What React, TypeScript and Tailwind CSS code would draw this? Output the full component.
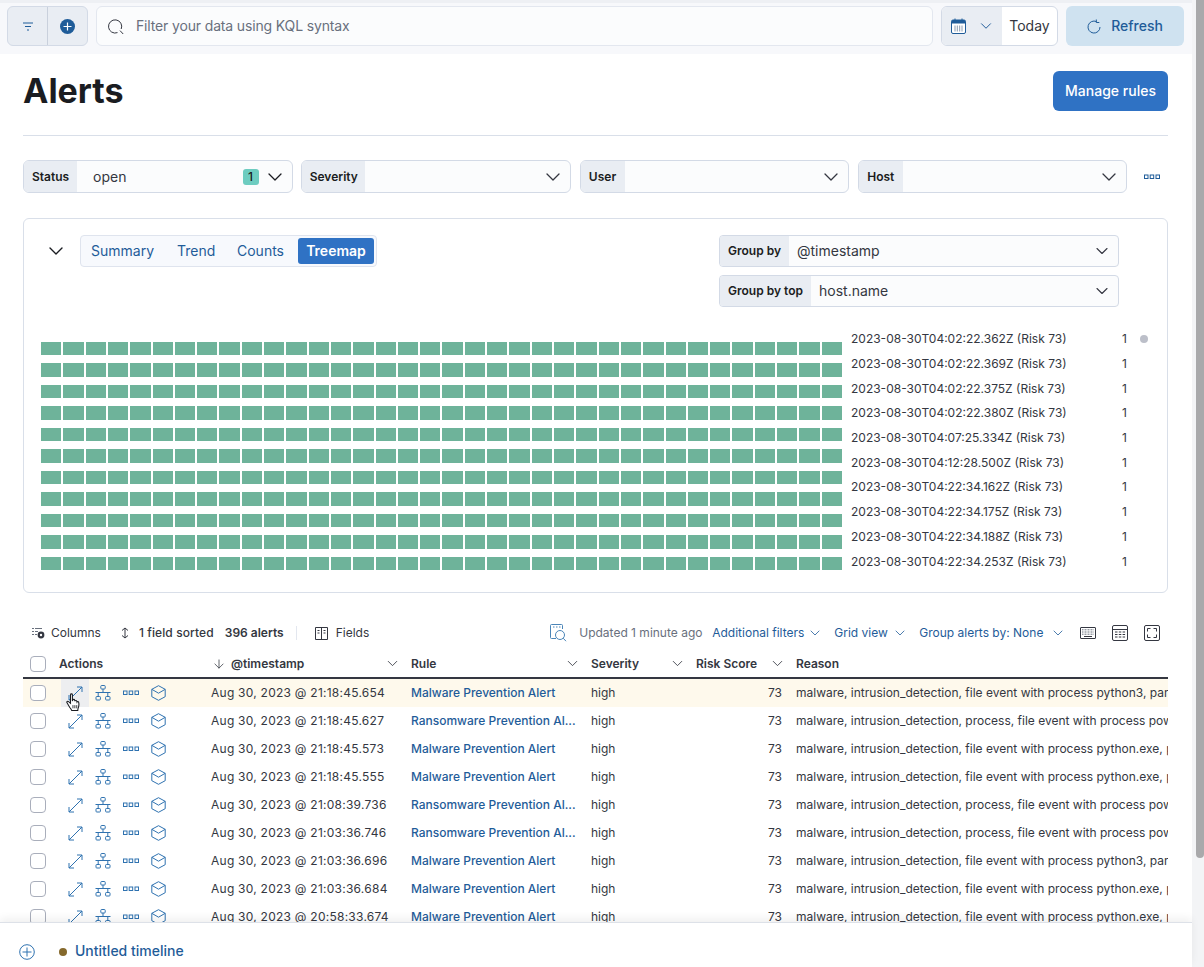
import { ChevronDown, ArrowDown } from 'lucide-react';

const legend = [
  '2023-08-30T04:02:22.362Z (Risk 73)',
  '2023-08-30T04:02:22.369Z (Risk 73)',
  '2023-08-30T04:02:22.375Z (Risk 73)',
  '2023-08-30T04:02:22.380Z (Risk 73)',
  '2023-08-30T04:07:25.334Z (Risk 73)',
  '2023-08-30T04:12:28.500Z (Risk 73)',
  '2023-08-30T04:22:34.162Z (Risk 73)',
  '2023-08-30T04:22:34.175Z (Risk 73)',
  '2023-08-30T04:22:34.188Z (Risk 73)',
  '2023-08-30T04:22:34.253Z (Risk 73)',
];

const rows = [
  ['Aug 30, 2023 @ 21:18:45.654', 'Malware Prevention Alert', 'malware, intrusion_detection, file event with process python3, parent process bash'],
  ['Aug 30, 2023 @ 21:18:45.627', 'Ransomware Prevention Al...', 'malware, intrusion_detection, process, file event with process powershell.exe'],
  ['Aug 30, 2023 @ 21:18:45.573', 'Malware Prevention Alert', 'malware, intrusion_detection, file event with process python.exe, parent process'],
  ['Aug 30, 2023 @ 21:18:45.555', 'Malware Prevention Alert', 'malware, intrusion_detection, file event with process python.exe, parent process'],
  ['Aug 30, 2023 @ 21:08:39.736', 'Ransomware Prevention Al...', 'malware, intrusion_detection, process, file event with process powershell.exe'],
  ['Aug 30, 2023 @ 21:03:36.746', 'Ransomware Prevention Al...', 'malware, intrusion_detection, process, file event with process powershell.exe'],
  ['Aug 30, 2023 @ 21:03:36.696', 'Malware Prevention Alert', 'malware, intrusion_detection, file event with process python3, parent process bash'],
  ['Aug 30, 2023 @ 21:03:36.684', 'Malware Prevention Alert', 'malware, intrusion_detection, file event with process python.exe, parent process'],
  ['Aug 30, 2023 @ 20:58:33.674', 'Malware Prevention Alert', 'malware, intrusion_detection, file event with process python.exe, parent process'],
];

const cells = Array.from({ length: 396 }, (_, i) => i);

function Dots({ className = '' }: { className?: string }) {
  return (
    <svg width="16" height="6" viewBox="0 0 16 6" fill="none" stroke="currentColor" strokeWidth="1" className={className}>
      <rect x="0.5" y="1" width="3.5" height="3.5" />
      <rect x="6.2" y="1" width="3.5" height="3.5" />
      <rect x="12" y="1" width="3.5" height="3.5" />
    </svg>
  );
}

function ExpandIcon() {
  return (
    <svg width="15" height="15" viewBox="0 0 15 15" fill="none" stroke="currentColor" strokeWidth="1">
      <path d="M1 14 14 1M9 1h5v5M1 9v5h5" />
    </svg>
  );
}

function TreeIcon() {
  return (
    <svg width="16" height="16" viewBox="0 0 16 16" fill="none" stroke="currentColor" strokeWidth="1">
      <rect x="5.800" y="0.500" width="4.400" height="3.500" rx="0.800" />
      <rect x="1" y="11.500" width="4.400" height="3.500" rx="0.800" />
      <rect x="10.600" y="11.500" width="4.400" height="3.500" rx="0.800" />
      <path d="M8 4v3.500M3.200 11.500V7.500M12.800 11.500V7.500M0.500 7.500h15" />
    </svg>
  );
}

function CubeIcon() {
  return (
    <svg width="15" height="16" viewBox="0 0 15 16" fill="none" stroke="currentColor" strokeWidth="1">
      <path d="M7.500 0.700 14.200 4.300v7.400L7.500 15.300.8 11.700V4.300zM.8 4.300l6.700 3.900 6.700-3.900" />
    </svg>
  );
}

function SearchIcon() {
  return (
    <svg width="16" height="17" viewBox="0 0 16 17" fill="none" stroke="currentColor" strokeWidth="1" className="text-[#343741]">
      <path d="M9.500 14.600A6.600 6.600 0 1 1 13.200 11M12 12.600 15.200 16" />
    </svg>
  );
}

function CalendarIcon() {
  return (
    <svg width="15" height="16" viewBox="0 0 15 16" fill="none" className="text-[#1f5c99]">
      <rect x="0.500" y="2" width="14" height="13.500" rx="1.500" fill="#ffffff" stroke="currentColor" />
      <path d="M0.500 3.500a1.500 1.500 0 0 1 1.500-1.500h11a1.500 1.500 0 0 1 1.500 1.500V5.500h-14z" fill="currentColor" />
      <path d="M4 0.500v2.500M11 0.500v2.500" stroke="currentColor" />
      <path d="M4 7.500v6M6.300 7.500v6M8.700 7.500v6M11 7.500v6" stroke="#8a9bb0" />
    </svg>
  );
}

function RefreshIcon() {
  return (
    <svg width="14" height="15" viewBox="0 0 14 15" fill="none" stroke="currentColor" strokeWidth="1">
      <path d="M9.500 2.600A6 6 0 1 0 13 8M9.300 0.500v3h3" />
    </svg>
  );
}

function FilterIcon() {
  return (
    <svg width="12" height="9" viewBox="0 0 12 9" fill="none" stroke="currentColor" strokeWidth="1">
      <path d="M1 1h10M3 4.500h6M5 8h2" />
    </svg>
  );
}

function PlusFilled() {
  return (
    <svg width="15" height="15" viewBox="0 0 15 15">
      <circle cx="7.500" cy="7.500" r="7.500" fill="#1f5c99" />
      <path d="M7.500 3.500v8M3.500 7.500h8" stroke="#ffffff" strokeWidth="1.200" />
    </svg>
  );
}

function PlusOutline() {
  return (
    <svg width="16" height="16" viewBox="0 0 16 16" fill="none" stroke="#2f72b0" strokeWidth="1">
      <circle cx="8" cy="8" r="7.300" />
      <path d="M8 3.500v9M3.500 8h9" />
    </svg>
  );
}

function ColumnsIcon() {
  return (
    <svg width="13" height="12" viewBox="0 0 13 12" className="text-[#343741]">
      <path d="M0 1h2v1H0zM0 4h2v1H0zM0 7h2v1H0zM3 1h7v1H3zM3 4h3v1H3zM3 7h2v1H3z" fill="#69707d" />
      <circle cx="9" cy="8" r="3.400" fill="currentColor" />
      <circle cx="9" cy="8" r="1.200" fill="#ffffff" />
    </svg>
  );
}

function SortIcon() {
  return (
    <svg width="10" height="12" viewBox="0 0 10 12" fill="none" stroke="#343741" strokeWidth="1">
      <path d="M5 1v10M2 3.500 5 1l3 2.500M2 8.500 5 11l3-2.500" />
    </svg>
  );
}

function FieldsIcon() {
  return (
    <svg width="13" height="13" viewBox="0 0 13 13" fill="none" stroke="#343741" strokeWidth="1">
      <path d="M.5.500h12v12H.5zM6.500.500v12M8.500 3.500h2M8.500 6h2M2.500 3.500h2M2.500 6h2" />
    </svg>
  );
}

function InspectIcon() {
  return (
    <svg width="17" height="18" viewBox="0 0 17 18" fill="none" stroke="#4a85b8" strokeWidth="1">
      <path d="M6 14.500H1.500a1 1 0 0 1-1-1v-12a1 1 0 0 1 1-1h10a1 1 0 0 1 1 1V5" />
      <path d="M3 3h1.500M6 3h1.500M9 3h1.500" />
      <circle cx="10" cy="11" r="4.500" />
      <path d="M13.200 14.200 16 17.200" />
    </svg>
  );
}

function KeyboardIcon() {
  return (
    <svg width="16" height="12" viewBox="0 0 16 12" fill="none" stroke="#343741" strokeWidth="1">
      <rect x="0.500" y="0.500" width="15" height="11" rx="0.500" fill="#ffffff" />
      <path d="M2 2.800h12M2 5h12M2 7.200h12" stroke="#69707d" strokeDasharray="1 0.500" />
      <path d="M4 9.500h8" />
    </svg>
  );
}

function TableIcon() {
  return (
    <svg width="16" height="16" viewBox="0 0 16 16" fill="none" stroke="#343741" strokeWidth="1">
      <rect x="0.500" y="0.500" width="15" height="15" rx="1.500" />
      <path d="M.5 4.500h15" />
      <path d="M3 7h2.500M6.800 7h2.500M10.600 7h2.500M3 9.500h2.500M6.800 9.500h2.500M10.600 9.500h2.500M3 12h2.500M6.800 12h2.500M10.600 12h2.500" />
    </svg>
  );
}

function FullScreenIcon() {
  return (
    <svg width="16" height="16" viewBox="0 0 16 16" fill="none" stroke="#343741" strokeWidth="1">
      <rect x="0.500" y="0.500" width="15" height="15" rx="1.500" />
      <path d="M6.500 3.500h-3v3M9.500 3.500h3v3M6.500 12.500h-3v-3M9.500 12.500h3v-3" />
    </svg>
  );
}

function PointerIcon() {
  return (
    <svg width="16" height="19" viewBox="0 0 15 18" className="absolute left-[43px] top-[14px]">
      <path
        d="M4.200 1.600c0-1 1.800-1 1.800 0v6l.3-1c.4-.8 1.700-.7 1.800.2l.2.900c.2-.8 1.600-.8 1.800.1l.2.800c.3-.7 1.600-.6 1.700.3.300 2 .2 3.700-.4 5-.4 1-.5 1.600-.5 2.600H5.300c-.3-1-1-1.800-1.800-2.800L.9 9.300c-.6-1 .6-2 1.500-1.200l1.800 1.700z"
        fill="#ffffff"
        stroke="#1a1c21"
        strokeWidth="1"
      />
      <path d="M6.500 11.500v3M8.300 11.500v3M10.100 11.500v3" stroke="#1a1c21" strokeWidth="0.800" />
    </svg>
  );
}

function FilterControl({ label, value, badge, labelWidth }: { label: string; value?: string; badge?: boolean; labelWidth: string }) {
  return (
    <div className="flex h-[33px] w-[269.5px] items-stretch overflow-hidden rounded-md border border-[#d3dae6] bg-[#fbfcfd]">
      <div className={`flex items-center justify-center bg-[#e9edf3] text-[12px] font-semibold text-[#1a1c21] ${labelWidth}`}>{label}</div>
      <div className="flex flex-1 items-center pl-[16px] pr-[5px] text-[14px] text-[#343741]">
        <span className="flex-1">{value}</span>
        {badge && (
          <span className="mr-[4px] flex h-[16px] w-[16px] items-center justify-center rounded-[3px] bg-[#6dccc0] text-[12px] font-medium text-[#1a1c21]">1</span>
        )}
        <ChevronDown size={24} strokeWidth={1.3} className={badge ? 'text-[#1a1c21]' : 'text-[#343741]'} />
      </div>
    </div>
  );
}

function SelectRow({ label, value, labelWidth }: { label: string; value: string; labelWidth: string }) {
  return (
    <div className="flex h-[32px] w-[400px] items-stretch overflow-hidden rounded-[4px] border border-[#d3dae6] bg-[#fbfcfd]">
      <div className={`flex items-center justify-center bg-[#e9edf3] text-[12px] font-semibold text-[#1a1c21] ${labelWidth}`}>{label}</div>
      <div className="flex flex-1 items-center pl-[8px] pr-[6px] text-[14px] text-[#343741]">
        <span className="mb-[2px] flex-1">{value}</span>
        <ChevronDown size={20} strokeWidth={1.3} />
      </div>
    </div>
  );
}

function HeaderCell({ label, className }: { label: string; className: string }) {
  return (
    <div className={`flex shrink-0 items-center justify-between pr-[10px] ${className}`}>
      <span className="text-[12px] font-semibold text-[#343741]">{label}</span>
      <ChevronDown size={17} strokeWidth={1.2} className="text-[#343741]" />
    </div>
  );
}

export default function App() {
  return (
    <div className="relative flex h-[967px] w-[1204px] overflow-hidden bg-white font-['Inter',sans-serif] text-[#343741]">
      <div className="flex w-[1192px] shrink-0 flex-col">
        {/* search bar */}
        <div className="flex h-[54px] items-center gap-[8px] border-t-[3px] border-[#eef0f4] bg-[#f7f8fb] pb-[5px] pl-[7px] pr-[8px]">
          <div className="flex h-[40px] w-[81px] overflow-hidden rounded-md border border-[#d3dae6] bg-[#e9edf3]">
            <div className="flex w-[40px] items-center justify-center border-r border-[#c9d0dc] text-[#1f5c99]">
              <FilterIcon />
            </div>
            <div className="flex flex-1 items-center justify-center">
              <PlusFilled />
            </div>
          </div>
          <div className="flex h-[40px] w-[837px] items-center rounded-md border border-[#e3e7ef] bg-[#fbfcfd] pl-[11px]">
            <SearchIcon />
            <span className="mb-[2px] ml-[12px] text-[14px] tracking-[-0.15px] text-[#69707d]">Filter your data using KQL syntax</span>
          </div>
          <div className="flex h-[40px] w-[117px] overflow-hidden rounded-md border border-[#d3dae6] bg-white">
            <div className="flex w-[60px] items-center bg-[#e9edf3] pl-[9px]">
              <CalendarIcon />
              <ChevronDown size={18} strokeWidth={1.3} className="ml-[11px] text-[#1f5c99]" />
            </div>
            <div className="flex flex-1 items-center justify-center pb-[2px] text-[14px] text-[#343741]">Today</div>
          </div>
          <div className="flex h-[40px] w-[118px] items-center justify-center gap-[10px] rounded-md bg-[#cfe2f0] text-[14px] font-medium text-[#1f5c99]">
            <RefreshIcon />
            <span className="mb-[2px]">Refresh</span>
          </div>
        </div>

        {/* page title */}
        <div className="ml-[23px] mr-[24px] flex h-[82px] items-center justify-between border-b border-[#d9dfe9] pb-[9px] pt-[2px]">
          <h1 className="text-[34px] font-bold leading-none text-[#1a1c21]">Alerts</h1>
          <div className="flex h-[40px] w-[115px] items-center justify-center rounded-md bg-[#2f72c4] pb-[2px] text-[14px] font-medium text-white">Manage rules</div>
        </div>

        {/* filters */}
        <div className="mt-[24px] flex items-center gap-x-[8.75px] px-[23px]">
          <FilterControl label="Status" value="open" badge labelWidth="w-[53px]" />
          <FilterControl label="Severity" labelWidth="w-[63px]" />
          <FilterControl label="User" labelWidth="w-[44px]" />
          <FilterControl label="Host" labelWidth="w-[44px]" />
          <Dots className="ml-[8px] text-[#1f5c99]" />
        </div>

        {/* histogram panel */}
        <div className="ml-[23px] mr-[24px] mt-[25px] h-[375px] rounded-md border border-[#d9dfe9] pl-[17px]">
          <div className="flex h-[108px] pt-[16px]">
            <div className="flex w-[39px] items-start pl-[3px] pt-[4px]">
              <ChevronDown size={24} strokeWidth={1.4} className="text-[#1a1c21]" />
            </div>
            <div className="flex h-[32px] w-[297px] items-center rounded-[4px] border border-[#dfe4ee] bg-[#f7f9fd] pl-[10px] pr-[2px] text-[14px] text-[#1f5c99]">
              <span className="mb-[2px] w-[86px]">Summary</span>
              <span className="mb-[2px] w-[60px]">Trend</span>
              <span className="mb-[2px] w-[61px]">Counts</span>
              <span className="flex h-[26px] flex-1 items-center justify-center rounded-[3px] bg-[#2f72c4] pb-[2px] font-semibold text-white">Treemap</span>
            </div>
            <div className="ml-[342px] flex flex-col gap-[8px]">
              <SelectRow label="Group by" value="@timestamp" labelWidth="w-[69px]" />
              <SelectRow label="Group by top" value="host.name" labelWidth="w-[91px]" />
            </div>
          </div>
          <div className="flex">
            <div className="mt-[15px] grid h-[228px] w-[801px] grid-cols-[repeat(36,minmax(0,1fr))] grid-rows-[repeat(11,minmax(0,1fr))] gap-x-[2px] gap-y-[8px]">
              {cells.map((c) => (
                <div key={c} className="bg-[#6eb39a]" />
              ))}
            </div>
            <div className="ml-[9px] flex w-[300px] flex-col">
              {legend.map((l, i) => (
                <div key={l} className="flex h-[24.7px] items-center text-[12px] text-[#343741]">
                  <span className="w-[271px]">{l}</span>
                  <span className="text-[#343741]">1</span>
                  {i === 0 && <span className="ml-[13px] h-[8px] w-[8px] rounded-full bg-[#bcbfc9]" />}
                </div>
              ))}
            </div>
          </div>
        </div>

        {/* table toolbar */}
        <div className="mt-[28px] flex h-[24px] items-center whitespace-nowrap pl-[32px] text-[12px]">
          <ColumnsIcon />
          <span className="ml-[6px]">Columns</span>
          <span className="ml-[19px]"><SortIcon /></span>
          <span className="ml-[9px] font-medium tracking-[0.1px]">1 field sorted</span>
          <span className="ml-[11px] font-semibold">396 alerts</span>
          <span className="ml-[12px] h-[14px] w-px bg-[#e3e7ef]" />
          <span className="ml-[18px]"><FieldsIcon /></span>
          <span className="ml-[8px]">Fields</span>
          <span className="ml-[181px]"><InspectIcon /></span>
          <span className="ml-[12px] w-[124px] text-[#69707d]">Updated 1 minute ago</span>
          <span className="ml-[9px] w-[93px] text-[#1f5c99]">Additional filters</span>
          <ChevronDown size={16} strokeWidth={1.2} className="ml-[2px] text-[#1f5c99]" />
          <span className="ml-[11px] w-[53px] text-[#1f5c99]">Grid view</span>
          <ChevronDown size={16} strokeWidth={1.2} className="ml-[5px] text-[#1f5c99]" />
          <span className="ml-[11px] w-[125px] text-[#1f5c99]">Group alerts by: None</span>
          <ChevronDown size={16} strokeWidth={1.2} className="ml-[6px] text-[#1f5c99]" />
          <span className="ml-[14px]"><KeyboardIcon /></span>
          <span className="ml-[16px]"><TableIcon /></span>
          <span className="ml-[16px]"><FullScreenIcon /></span>
        </div>

        {/* table */}
        <div className="ml-[23px] mr-[24px] mt-[5px] overflow-hidden">
          <div className="flex h-[29px] items-center border-b-2 border-[#343741]">
            <div className="flex w-[36px] shrink-0 pl-[7px]">
              <span className="h-[16px] w-[16px] rounded-[4px] border border-[#a9aebb] bg-white" />
            </div>
            <div className="w-[152px] shrink-0 text-[12px] font-semibold text-[#343741]">Actions</div>
            <div className="flex w-[200px] shrink-0 items-center pl-[1px] pr-[10px]">
              <ArrowDown size={14} strokeWidth={1.3} className="mr-[5px] text-[#343741]" />
              <span className="flex-1 text-[12px] font-semibold text-[#343741]">@timestamp</span>
              <ChevronDown size={17} strokeWidth={1.2} />
            </div>
            <HeaderCell label="Rule" className="w-[180px]" />
            <HeaderCell label="Severity" className="w-[105px]" />
            <HeaderCell label="Risk Score" className="w-[100px]" />
            <span className="text-[12px] font-semibold text-[#343741]">Reason</span>
          </div>
          {rows.map((r, i) => (
            <div key={i} className={`relative flex h-[28px] items-center whitespace-nowrap text-[12px] ${i === 0 ? 'bg-[#fef9ec]' : ''}`}>
              <div className="flex w-[36px] shrink-0 pl-[7px]">
                <span className="h-[16px] w-[16px] rounded-[4px] border border-[#a9aebb] bg-white" />
              </div>
              <div className="flex w-[152px] shrink-0 items-center text-[#2f72b0]">
                <span className={`ml-[2px] flex h-[28px] w-[28px] items-center justify-center ${i === 0 ? 'bg-[#edeef0]' : ''}`}>
                  <ExpandIcon />
                </span>
                <span className="ml-[6px]"><TreeIcon /></span>
                <span className="ml-[12px]"><Dots /></span>
                <span className="ml-[12px]"><CubeIcon /></span>
              </div>
              <span className="w-[200px] shrink-0 tracking-[0.25px]">{r[0]}</span>
              <span className="w-[180px] shrink-0 font-medium text-[#1f5c99]">{r[1]}</span>
              <span className="w-[105px] shrink-0">high</span>
              <span className="w-[86px] shrink-0 text-right">73</span>
              <span className="ml-[14px] shrink-0">{r[2]}</span>
              {i === 0 && <PointerIcon />}
            </div>
          ))}
        </div>
      </div>

      {/* scrollbar */}
      <div className="flex h-full w-[12px] shrink-0 bg-[#f3f4f6] pl-[4px]">
        <div className="h-[858px] w-full rounded-b-[4px] bg-[#a9a9ab]" />
      </div>

      {/* timeline bottom bar */}
      <div className="absolute bottom-0 left-0 flex h-[45px] w-[1192px] items-center border-t border-[#dde1e8] bg-white pl-[19px] pt-[13px] shadow-[0_-4px_8px_rgba(0,0,0,0.06)]">
        <PlusOutline />
        <span className="ml-[24px] h-[8px] w-[8px] rounded-full bg-[#85692c]" />
        <span className="mb-[2px] ml-[8px] text-[14px] font-medium text-[#1f5c99]">Untitled timeline</span>
      </div>
    </div>
  );
}
